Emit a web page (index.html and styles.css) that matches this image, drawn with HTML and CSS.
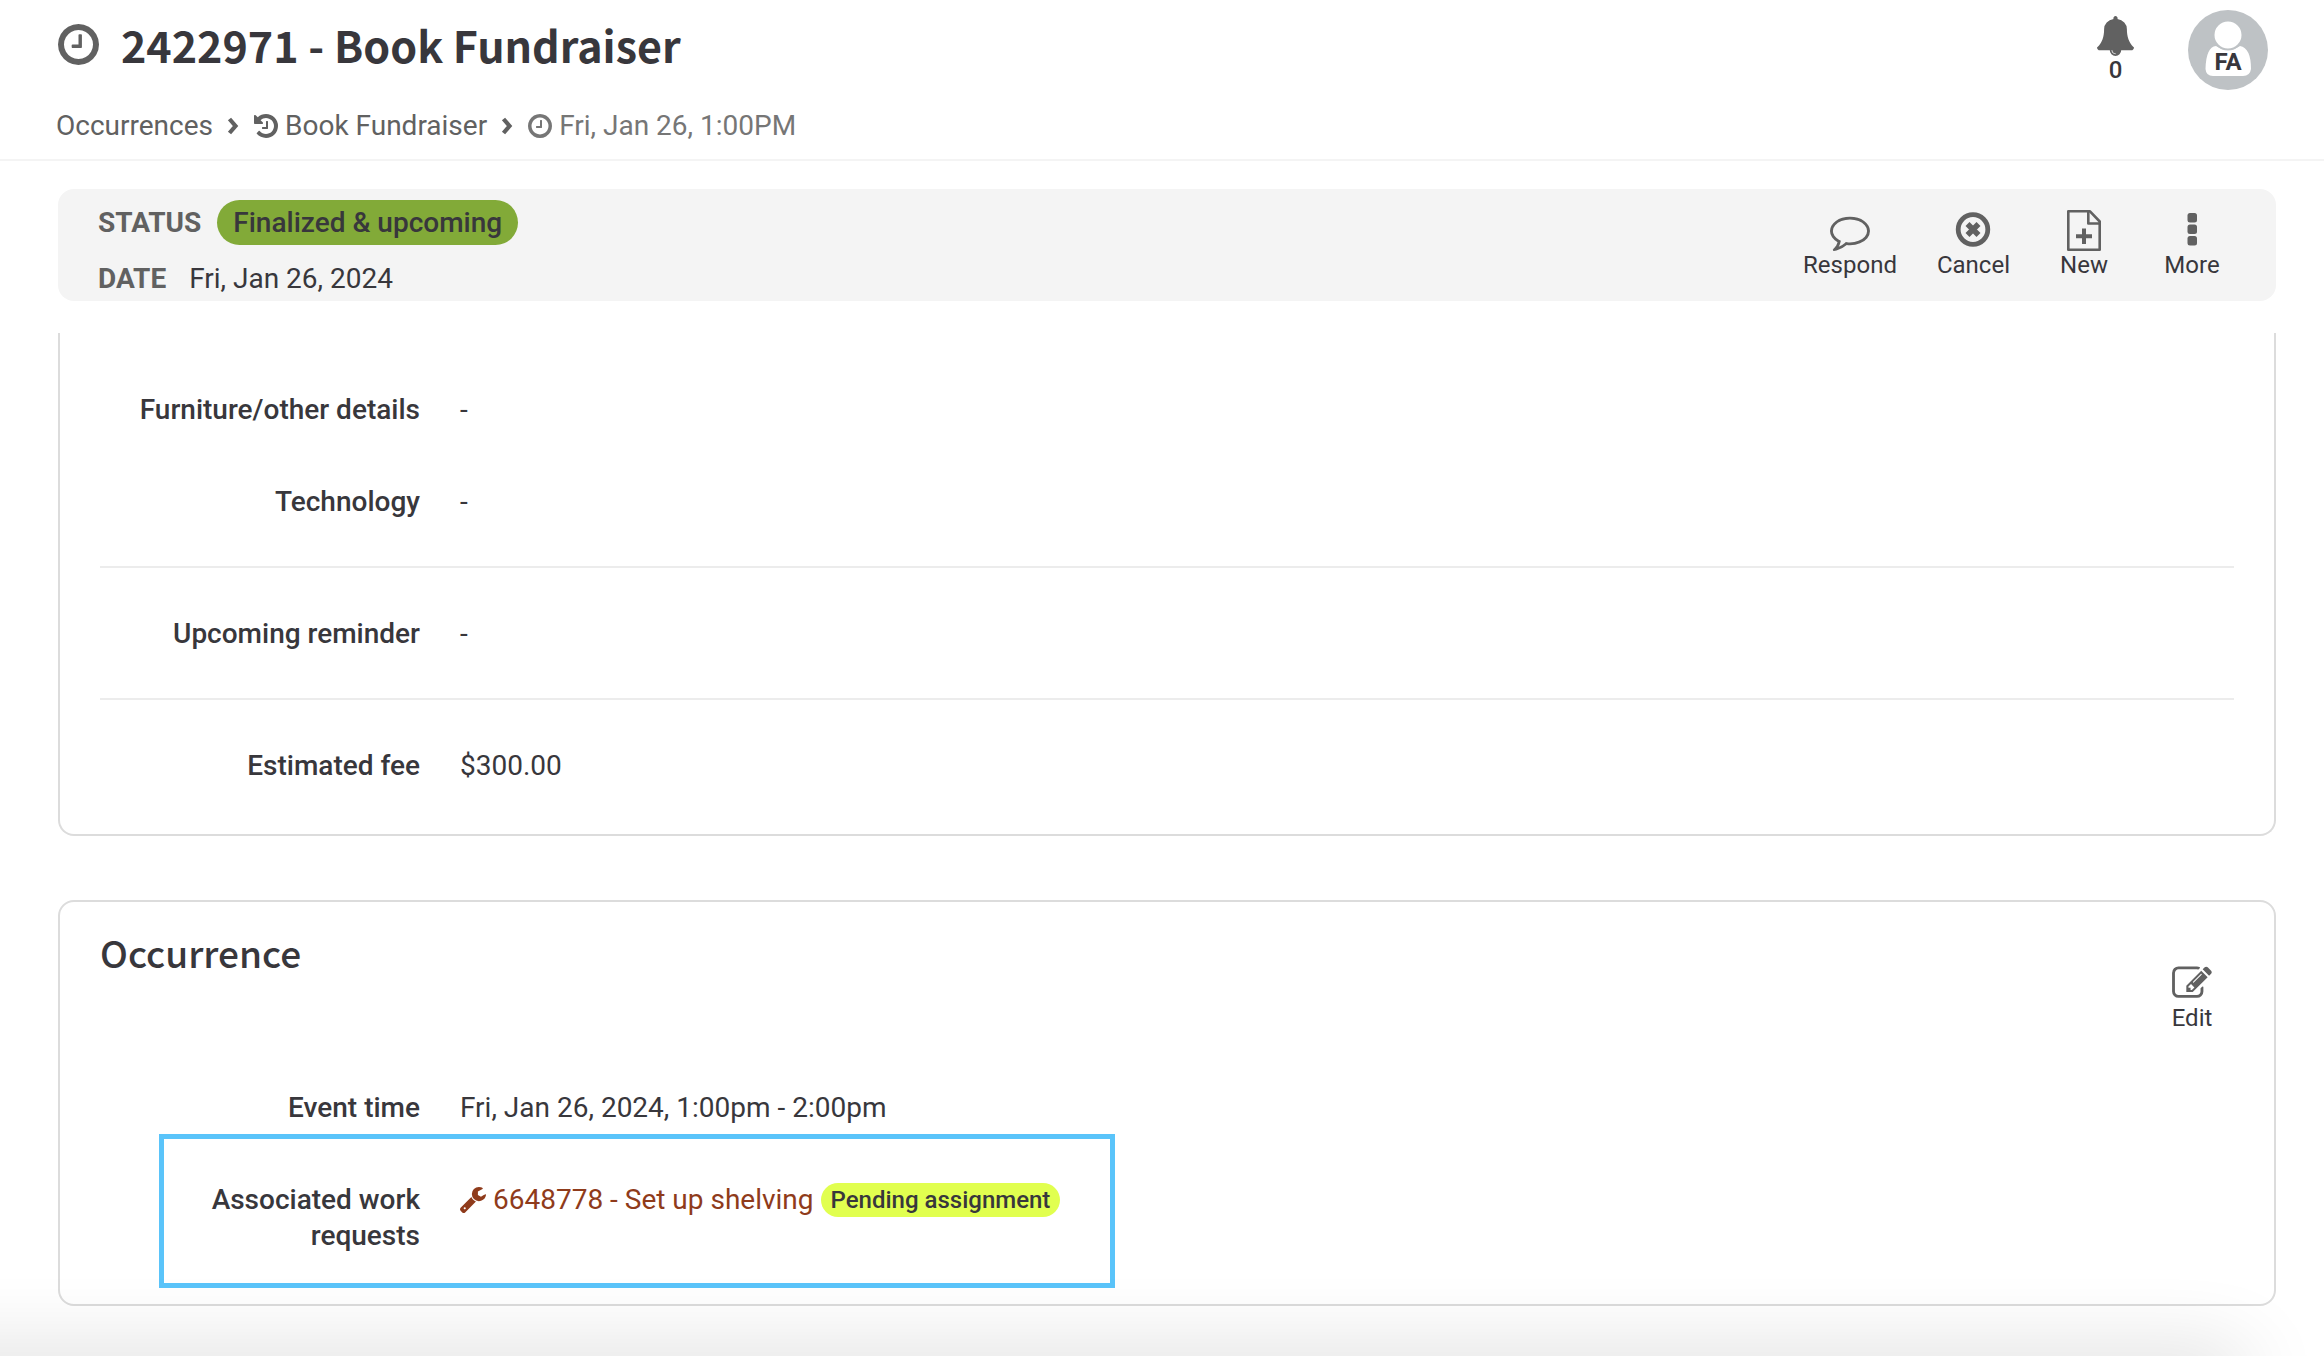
FILE: index.html
```html
<!DOCTYPE html>
<html lang="en">
<head>
<meta charset="utf-8">
<meta name="viewport" content="width=device-width, initial-scale=1">
<title>2422971 - Book Fundraiser</title>
<link rel="stylesheet" href="styles.css">
</head>
<body>
<svg class="sprite" aria-hidden="true">
  <symbol id="clock" viewBox="0 128 1536 1536"><path d="M896 544v448q0 14-9 23t-23 9h-320q-14 0-23-9t-9-23v-64q0-14 9-23t23-9h224v-352q0-14 9-23t23-9h64q14 0 23 9t9 23zm416 352q0-148-73-273t-198-198-273-73-273 73-198 198-73 273 73 273 198 198 273 73 273-73 198-198 73-273zm224 0q0 209-103 385.500t-279.500 279.500-385.500 103-385.500-103-279.500-279.500-103-385.500 103-385.500 279.500-279.500 385.500-103 385.500 103 279.500 279.500 103 385.500z"/></symbol>
  <symbol id="chevron" viewBox="0 0 13 18"><path d="M2.500 2L8.500 9L2.500 16" fill="none" stroke="currentColor" stroke-width="4.200"/></symbol>
</svg>

<header class="page-header">
  <div class="heading">
    <h1 class="title"><svg class="icon title-icon"><use href="#clock"/></svg>2422971 - Book Fundraiser</h1>
    <nav class="breadcrumbs" aria-label="Breadcrumb">
      <a href="#">Occurrences</a>
      <svg class="icon chevron"><use href="#chevron"/></svg>
      <a href="#"><svg class="icon crumb-icon" viewBox="128 128 1536 1536"><path d="M1664 896q0 156-61 298t-164 245-245 164-298 61q-172 0-327-72.500t-264-204.500q-7-10-6.500-22.500t8.500-20.500l137-138q10-9 25-9 16 2 23 12 73 95 179 147t225 52q104 0 198.500-40.500t163.500-109.500 109.500-163.500 40.500-198.500-40.500-198.500-109.500-163.500-163.500-109.500-198.500-40.500q-98 0-188 35.500t-160 101.500l137 138q31 30 14 69-17 40-59 40h-448q-26 0-45-19t-19-45v-448q0-42 40-59 39-17 69 14l130 129q107-101 244.500-156.500t284.500-55.500q156 0 298 61t245 164 164 245 61 298zm-640-288v448q0 14-9 23t-23 9h-320q-14 0-23-9t-9-23v-64q0-14 9-23t23-9h224v-352q0-14 9-23t23-9h64q14 0 23 9t9 23z"/></svg>Book Fundraiser</a>
      <svg class="icon chevron"><use href="#chevron"/></svg>
      <span class="current" aria-current="page"><svg class="icon crumb-icon"><use href="#clock"/></svg>Fri, Jan 26, 1:00PM</span>
    </nav>
  </div>
  <div class="account">
    <button class="alerts" type="button" aria-label="Notifications">
      <svg class="icon bell" viewBox="64 0 1664 1792"><path d="M912 1696q0-16-16-16-59 0-101.500-42.500t-42.500-101.500q0-16-16-16t-16 16q0 73 51.500 124.500t124.500 51.500q16 0 16-16zm816-288q0 52-38 90t-90 38h-448q0 106-75 181t-181 75-181-75-75-181h-448q-52 0-90-38t-38-90q50-42 91-88t85-119.500 74.500-158.500 50-206 19.500-260q0-152 117-282.500t307-158.500q-8-19-8-39 0-40 28-68t68-28 68 28 28 68q0 20-8 39 190 28 307 158.500t117 282.500q0 139 19.500 260t50 206 74.500 158.500 85 119.500 91 88z"/></svg>
      <span>0</span>
    </button>
    <button class="avatar" type="button" aria-label="Account">
      <svg class="person" viewBox="0 0 80 80"><circle cx="40" cy="40" r="40" fill="#bec2c5"/><path d="M28 36Q40 44 52 36Q63 38 63 59Q62 66 55 66H25Q18 66 17.500 59Q18 37 28 36Z" fill="#fff"/><circle cx="40" cy="25" r="14.500" fill="#fff" stroke="#bec2c5" stroke-width="2"/></svg>
      <span class="initials">FA</span>
    </button>
  </div>
</header>

<main class="content">
  <section class="status-bar">
    <dl class="summary">
      <div class="summary-row"><dt>STATUS</dt><dd class="pill pill-green">Finalized &amp; upcoming</dd></div>
      <div class="summary-row date-row"><dt>DATE</dt><dd>Fri, Jan 26, 2024</dd></div>
    </dl>
    <div class="actions">
      <button class="action" type="button"><svg class="icon action-icon" viewBox="0 0 42 42"><path transform="translate(1 2) scale(.0223)" d="M896 384q-204 0-381.500 69.500t-282 187.500-104.500 255q0 112 71.500 213.500t201.500 175.500l87 50-27 96q-24 91-70 172 152-63 275-171l43-38 57 6q69 8 130 8 204 0 381.500-69.500t282-187.500 104.500-255-104.500-255-282-187.500-381.500-69.500zm896 512q0 174-120 321.500t-326 233-450 85.500q-70 0-145-8-198 175-460 242-49 14-114 22h-5q-15 0-27-10.500t-16-27.500v-1q-3-4-.5-12t2-10 4.500-9.500l6-9 7-8.500 8-9q7-8 31-34.500t34.500-38 31-39.500 32.500-51 27-59 26-76q-157-89-247.500-220t-90.500-281q0-130 71-248.500t191-204.500 286-136.500 348-50.500 348 50.500 286 136.500 191 204.500 71 248.500z"/></svg>Respond</button>
      <button class="action" type="button"><svg class="icon action-icon" viewBox="0 0 42 42"><circle cx="21" cy="20.500" r="14.800" fill="none" stroke="currentColor" stroke-width="4.800"/><path d="M15.500 15L26.500 26M26.500 15L15.500 26" fill="none" stroke="currentColor" stroke-width="5.600"/></svg>Cancel</button>
      <button class="action" type="button"><svg class="icon action-icon" viewBox="0 0 42 42"><g fill="none" stroke="currentColor" stroke-width="2.600" stroke-linejoin="round"><path d="M5.300 2.300H27L36.700 12.500V40.700H5.300Z"/><path d="M25.300 2.300V14.500H36.700"/><path d="M21 19.500V35M13 27.200H29" stroke-width="4"/></g></svg>New</button>
      <button class="action" type="button"><svg class="icon action-icon" viewBox="0 0 42 42"><rect x="16.500" y="4" width="9.500" height="9.500" rx="2.500"/><rect x="16.500" y="15.500" width="9.500" height="9.500" rx="2.500"/><rect x="16.500" y="27" width="9.500" height="9.500" rx="2.500"/></svg>More</button>
    </div>
  </section>

  <section class="panel panel-continued">
    <dl class="details">
      <div class="field"><dt>Furniture/other details</dt><dd>-</dd></div>
      <div class="field"><dt>Technology</dt><dd>-</dd></div>
    </dl>
    <hr class="divider">
    <dl class="details">
      <div class="field"><dt>Upcoming reminder</dt><dd>-</dd></div>
    </dl>
    <hr class="divider">
    <dl class="details">
      <div class="field"><dt>Estimated fee</dt><dd>$300.00</dd></div>
    </dl>
  </section>

  <section class="panel">
    <div class="panel-head">
      <h2 class="panel-title">Occurrence</h2>
      <button class="action edit" type="button"><svg class="icon edit-icon" viewBox="0 106 1792 1440"><path d="M888 1184l116-116-152-152-116 116v56h96v96h56zm440-720q-16-16-33 1l-350 350q-17 17-1 33t33-1l350-350q17-17 1-33zm80 594v190q0 119-84.500 203.500t-203.500 84.500h-832q-119 0-203.500-84.500t-84.500-203.500v-832q0-119 84.500-203.500t203.500-84.500h832q63 0 117 25 15 7 18 23 3 17-9 29l-49 49q-14 14-32 8-23-6-45-6h-832q-66 0-113 47t-47 113v832q0 66 47 113t113 47h832q66 0 113-47t47-113v-126q0-13 9-22l64-64q15-15 35-7t20 29zm-96-738l288 288-672 672h-288v-288zm444 132l-92 92-288-288 92-92q28-28 68-28t68 28l152 152q28 28 28 68t-28 68z"/></svg>Edit</button>
    </div>
    <dl class="details">
      <div class="field"><dt>Event time</dt><dd>Fri, Jan 26, 2024, 1:00pm - 2:00pm</dd></div>
      <div class="field highlighted"><dt>Associated work requests</dt><dd class="request"><a class="request-link" href="#"><svg class="icon wrench" viewBox="85 128 1642 1643"><path d="M448 1472q0-26-19-45t-45-19-45 19-19 45 19 45 45 19 45-19 19-45zm644-420l-682 682q-37 37-90 37-52 0-91-37l-106-108q-38-36-38-90 0-53 38-91l681-681q39 98 114.500 173.500t173.500 114.500zm634-435q0 39-23 106-47 134-164.500 217.500t-258.500 83.500q-185 0-316.500-131.500t-131.500-316.500 131.500-316.500 316.500-131.500q58 0 121.500 16.500t107.500 46.500q16 11 16 28t-16 28l-293 169v224l193 107q5-3 79-48.500t135.500-81 70.500-35.500q15 0 23.500 10t8.500 25z"/></svg>6648778 - Set up shelving</a><span class="pill pill-lime">Pending assignment</span></dd></div>
    </dl>
  </section>
</main>
<div class="bottom-shade"></div>
</body>
</html>
```
FILE: styles.css
```css
*,
*::after {
  box-sizing: border-box;
}

body {
  margin: 0;
  background: #fff;
  color: #38373c;
  font: 400 28px/36px Roboto, sans-serif;
  overflow-x: hidden;
}

dl, dd, h1, h2 {
  margin: 0;
}

button {
  padding: 0;
  border: 0;
  background: none;
  color: inherit;
  font: inherit;
  cursor: pointer;
}

a {
  color: inherit;
  text-decoration: none;
}

.sprite {
  display: none;
}

.icon {
  display: block;
  flex: none;
  color: #616161;
  fill: currentColor;
}

/* Header */
.page-header {
  display: flex;
  justify-content: space-between;
  padding: 8px 56px 15px;
  border-bottom: 2px solid #f4f4f4;
}

.title {
  display: flex;
  align-items: center;
  gap: 22px;
  padding-left: 2px;
  font: 700 43px/72px "Noto Sans CJK SC", sans-serif;
}

.title-icon {
  width: 41px;
  height: 41px;
}

.breadcrumbs {
  display: flex;
  align-items: center;
  gap: 14px;
  padding-top: 28px;
  color: #616161;
}

.breadcrumbs a,
.breadcrumbs .current {
  display: flex;
  align-items: center;
  gap: 7px;
}

.breadcrumbs .current,
.breadcrumbs .current .icon {
  color: #767676;
}

.crumb-icon {
  width: 24px;
  height: 24px;
}

.chevron {
  width: 13px;
  height: 18px;
}

.account {
  display: flex;
  align-items: flex-start;
  gap: 54px;
  padding-top: 2px;
}

.alerts {
  padding-top: 6px;
  font-size: 24px;
  font-weight: 500;
  line-height: 28px;
}

.bell {
  width: 37px;
  height: 40px;
}

.avatar {
  display: grid;
  width: 80px;
  height: 80px;
}

.person,
.initials {
  grid-area: 1 / 1;
}

.initials {
  padding-top: 34px;
  font-size: 24px;
  font-weight: 700;
}

/* Status bar */
.content {
  padding: 28px 48px 50px 58px;
}

.status-bar {
  display: flex;
  justify-content: space-between;
  align-items: flex-start;
  padding: 11px 30px 4px 40px;
  border-radius: 16px;
  background: #f4f4f4;
}

.summary-row {
  display: flex;
  align-items: center;
  gap: 16px;
}

.summary dt {
  color: #616161;
  font-weight: 700;
}

.date-row {
  gap: 23px;
  padding-top: 16px;
}

.pill {
  font-weight: 500;
}

.pill-green {
  padding: 5px 16px 4px;
  border-radius: 23px;
  background: #82aa38;
}

.pill-lime {
  padding: 0 10px;
  border-radius: 17px;
  background: #e1ff4f;
  font-size: 24px;
  line-height: 34px;
}

.actions {
  display: flex;
  padding-top: 9px;
}

.action {
  display: flex;
  flex-direction: column;
  align-items: center;
  min-width: 108px;
  padding: 0 20px;
  font-size: 24px;
  line-height: 28px;
}

.action-icon {
  width: 42px;
  height: 42px;
}

/* Panels */
.panel {
  margin-top: 64px;
  padding: 0 40px 23px;
  border: 2px solid #dcdcdc;
  border-radius: 16px;
}

.panel-continued {
  margin-top: 32px;
  padding-top: 30px;
  border-top: 0;
  border-radius: 0 0 16px 16px;
}

.panel-head {
  display: flex;
  justify-content: space-between;
  align-items: flex-start;
  padding: 22px 0 29px;
}

.panel-title {
  font: 500 37px/56px "Noto Sans CJK SC", sans-serif;
}

.edit {
  min-width: 84px;
  padding: 42px 0 0;
}

.edit-icon {
  width: 40px;
  height: 32px;
  margin-bottom: 6px;
}

.field {
  position: relative;
  display: grid;
  grid-template-columns: 320px 1fr;
  column-gap: 40px;
  padding: 29px 0 27px;
}

.field dt {
  padding-left: 32px;
  font-weight: 500;
  text-align: right;
}

.divider {
  height: 2px;
  margin: 19px 0;
  border: 0;
  background: #ececec;
}

.request {
  display: flex;
  align-items: center;
  align-self: start;
  gap: 7px;
}

.request-link {
  display: flex;
  align-items: center;
  gap: 7px;
  color: #8f3b1b;
}

.wrench {
  width: 26px;
  height: 26px;
  color: inherit;
}

/* Outline drawn over the row it calls out */
.highlighted::after {
  content: "";
  position: absolute;
  top: -19px;
  left: 59px;
  width: 956px;
  height: 154px;
  border: 5px solid #5ac4fa;
  pointer-events: none;
}

.bottom-shade {
  position: fixed;
  right: 80px;
  bottom: -40px;
  left: -100px;
  height: 40px;
  box-shadow: 0 0 80px rgba(0, 0, 0, 0.19);
  pointer-events: none;
}
```
